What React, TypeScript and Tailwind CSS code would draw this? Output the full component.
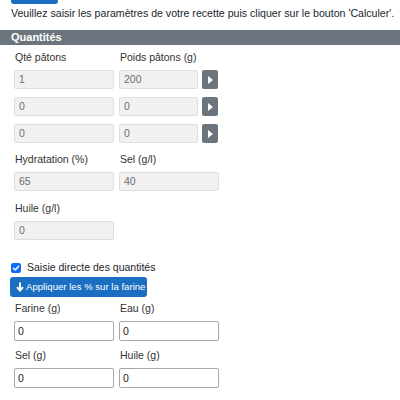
import React from "react";

const font = { fontFamily: '"Liberation Sans", Arial, sans-serif' };

function Label({ children }: { children: React.ReactNode }) {
  return <div className="h-4 leading-4 text-[10.5px] text-[#333] pl-[1px] mb-[5px] whitespace-nowrap">{children}</div>;
}

function ReadInput({ value, w = "w-[100px]" }: { value: string; w?: string }) {
  return (
    <div className={`${w} h-[19px] rounded-[2px] border border-[#dedede] bg-[#f1f1f1] text-[10.5px] text-[#6e6e6e] leading-[17px] pl-[4px]`}>
      {value}
    </div>
  );
}

function EditInput({ value }: { value: string }) {
  return (
    <div className="w-[100px] h-[20px] rounded-[2px] border border-[#a8a8a8] bg-white text-[10.5px] text-[#222] leading-[18px] pl-[3px]">
      {value}
    </div>
  );
}

function ArrowBtn() {
  return (
    <div className="w-[16px] h-[19px] rounded-[2px] bg-[#6c757d] flex items-center justify-center">
      <svg width="5" height="8" viewBox="0 0 5 8">
        <path d="M0 0 L5 4 L0 8 Z" fill="white" />
      </svg>
    </div>
  );
}

export default function App() {
  const poids = [
    ["1", "200"],
    ["0", "0"],
    ["0", "0"],
  ];
  return (
    <div className="w-[400px] h-[400px] overflow-hidden bg-white" style={font}>
      <div className="ml-[11px] w-[47px] h-[4px] bg-[#1b6ec2] rounded-b-[3px]" />
      <div className="pl-[11px] mt-[2px] h-[14px] leading-[14px] text-[10.6px] text-[#212529] whitespace-nowrap">
        Veuillez saisir les paramètres de votre recette puis cliquer sur le bouton 'Calculer'.
      </div>

      <div className="mt-[10px] h-[15px] bg-[#6c757d] text-white font-bold text-[11px] leading-[15px] pl-[11px]">
        Quantités
      </div>

      <div className="pl-[14px]">
        <div className="mt-[4px] grid grid-cols-[100px_100px] gap-x-[5px]">
          <Label>Qté pâtons</Label>
          <Label>Poids pâtons (g)</Label>
        </div>
        <div className="flex flex-col gap-[8px]">
          {poids.map(([q, p], i) => (
            <div key={i} className="flex gap-[5px]">
              <ReadInput value={q} />
              <div className="flex gap-[4px]">
                <ReadInput value={p} w="w-[79px]" />
                <ArrowBtn />
              </div>
            </div>
          ))}
        </div>

        <div className="mt-[8px] grid grid-cols-[100px_100px] gap-x-[5px]">
          <Label>Hydratation (%)</Label>
          <Label>Sel (g/l)</Label>
          <ReadInput value="65" />
          <ReadInput value="40" />
        </div>

        <div className="mt-[9px]">
          <Label>Huile (g/l)</Label>
          <ReadInput value="0" />
        </div>
      </div>

      <div className="pl-[11px] mt-[23px] flex items-center gap-[6px] h-[10px]">
        <div className="w-[10px] h-[10px] rounded-[2px] bg-[#0d6efd] flex items-center justify-center">
          <svg width="8" height="8" viewBox="0 0 8 8">
            <path d="M1.5 4.2 L3.3 6 L6.6 2.2" stroke="white" strokeWidth="1.4" fill="none" strokeLinecap="round" strokeLinejoin="round" />
          </svg>
        </div>
        <span className="text-[10.5px] text-[#212529]">Saisie directe des quantités</span>
      </div>

      <div className="ml-[10px] mt-[4px] w-[137px] h-[20px] rounded-[3px] bg-[#1b6ec2] text-white text-[9.6px] flex items-center pl-[6px] gap-[2px] whitespace-nowrap">
        <svg width="8" height="10" viewBox="0 0 8 10" className="shrink-0">
          <path d="M4 0.5 V8 M1 5.2 L4 8.6 L7 5.2" stroke="white" strokeWidth="2" fill="none" />
        </svg>
        <span>Appliquer les % sur la farine</span>
      </div>

      <div className="pl-[14px] mt-[3px] grid grid-cols-[100px_100px] gap-x-[5px]">
        <Label>Farine (g)</Label>
        <Label>Eau (g)</Label>
        <EditInput value="0" />
        <EditInput value="0" />
        <div className="h-[6px]" />
        <div className="h-[6px]" />
        <Label>Sel (g)</Label>
        <Label>Huile (g)</Label>
        <EditInput value="0" />
        <EditInput value="0" />
      </div>
    </div>
  );
}
